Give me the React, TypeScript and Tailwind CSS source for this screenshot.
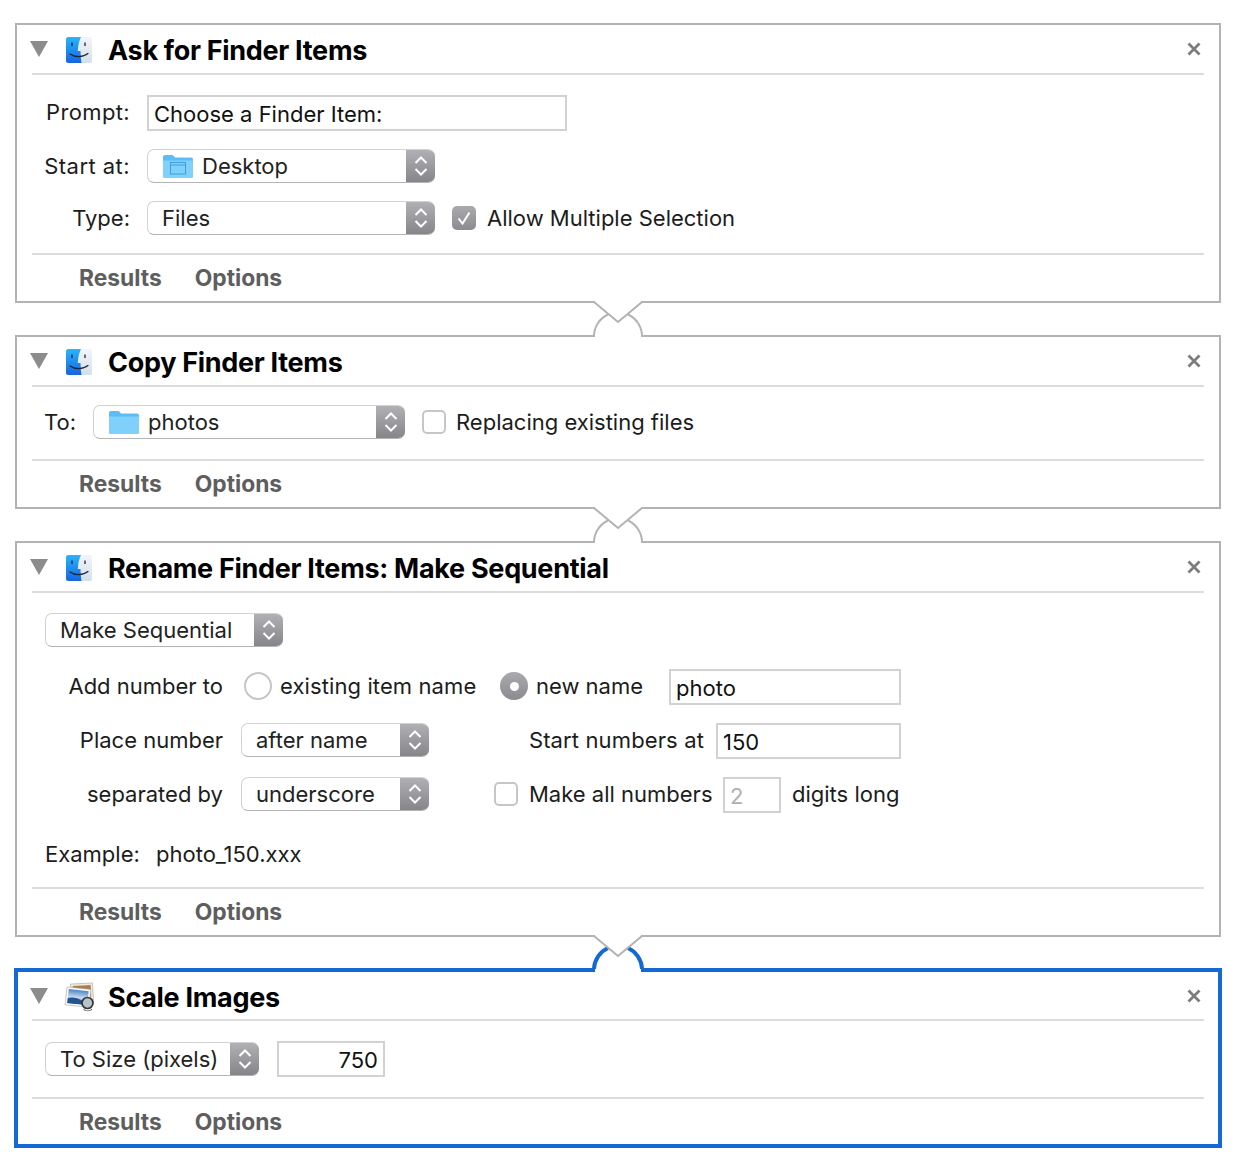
import type { ReactNode } from "react";
import clsx from "clsx";

const FinderIcon = () => (
  <svg width="30" height="30" viewBox="0 0 30 30" className="shrink-0">
    <defs>
      <linearGradient id="finderBlue" x1="0" y1="0" x2="0" y2="1">
        <stop offset="0" stopColor="#2ab4fa" />
        <stop offset="1" stopColor="#1665e0" />
      </linearGradient>
      <linearGradient id="finderPale" x1="0" y1="0" x2="0" y2="1">
        <stop offset="0" stopColor="#f3f5f8" />
        <stop offset="1" stopColor="#d5dfe9" />
      </linearGradient>
    </defs>
    <rect x="2" y="2" width="26" height="26" rx="2.5" fill="url(#finderPale)" />
    <path d="M4.500 2H17c-1.600 3.500-3 8-3.200 14H16.500c0 4 .3 8 1 12H4.500A2.500 2.500 0 0 1 2 25.500V4.500A2.500 2.500 0 0 1 4.500 2Z" fill="url(#finderBlue)" />
    <path d="M8 7.500v3.500M21 7.500v3.500" stroke="#16263f" strokeWidth="1.300" />
    <path d="M6 19c4.500 3.500 13 3.500 18 -.5" fill="none" stroke="#16263f" strokeWidth="1.200" strokeLinecap="round" />
  </svg>
);

const ScaleIcon = () => (
  <svg width="32" height="30" viewBox="0 0 32 30" className="shrink-0">
    <defs>
      <linearGradient id="photoSky" x1="0" y1="0" x2="0" y2="1">
        <stop offset="0" stopColor="#4d86c4" />
        <stop offset="0.55" stopColor="#c9dcee" />
        <stop offset="1" stopColor="#1e4f8c" />
      </linearGradient>
    </defs>
    <rect x="7" y="1.500" width="22" height="17" fill="#f1ece0" stroke="#a8a294" strokeWidth=".6" transform="rotate(-3 18 10)" />
    <rect x="9" y="3.500" width="18" height="12" fill="#a87f4a" transform="rotate(-3 18 10)" />
    <g transform="rotate(6 13 15)">
      <rect x="2" y="6" width="24" height="18" fill="#fafafa" stroke="#a9a9a9" strokeWidth=".6" />
      <rect x="4" y="8" width="20" height="14" fill="url(#photoSky)" />
      <path d="M4 17c5-2 10-1 14 1l6 1v3H4Z" fill="#24548f" />
    </g>
    <circle cx="23.500" cy="21" r="5.500" fill="#b9c2c8" stroke="#35363a" strokeWidth="1.700" />
    <path d="M19.500 26.500c2 2.500 6.500 2.500 8.500 0v1.500c-2 1.500-6.500 1.500-8.500 0Z" fill="#6e6a60" />
  </svg>
);

const FolderIcon = ({ desktop }: { desktop?: boolean }) => (
  <svg width="30" height="24" viewBox="0 0 30 24" className="shrink-0">
    <path d="M0 3a2 2 0 0 1 2-2h7a2 2 0 0 1 1.500.700L12 3.500h16a2 2 0 0 1 2 2V22a2 2 0 0 1-2 2H2a2 2 0 0 1-2-2Z" fill="#5cbdf5" />
    <path d="M0 6.500h30V22a2 2 0 0 1-2 2H2a2 2 0 0 1-2-2Z" fill="#7fd0fb" />
    {desktop && (
      <g fill="none" stroke="#3d9fdb" strokeWidth="1">
        <rect x="7.500" y="8.500" width="15" height="11.500" />
        <path d="M7.500 11h15" />
      </g>
    )}
  </svg>
);

const Select = ({ width, label, folder, desktop }: { width: string; label: string; folder?: boolean; desktop?: boolean }) => (
  <div className={clsx("flex h-[34px] shrink-0 items-stretch overflow-hidden rounded-[7px] border border-r-0 border-[#d2d2d2] border-b-[#b4b4b4] bg-white", width)}>
    <div className={clsx("flex min-w-0 flex-1 items-center text-[#222]", folder ? "gap-[9px] pl-[15px]" : "pl-[14px]")}>
      {folder && <FolderIcon desktop={desktop} />}
      <span className="whitespace-nowrap">{label}</span>
    </div>
    <div className="flex w-[29px] items-center justify-center bg-linear-to-b from-[#b0b0b5] to-[#85858a]">
      <svg width="16" height="24" viewBox="0 0 16 24" fill="none" stroke="#fff" strokeWidth="2">
        <path d="M2.500 9 8 3.500 13.500 9M2.500 15 8 20.500 13.500 15" />
      </svg>
    </div>
  </div>
);

const TextBox = ({ width, children, className }: { width: string; children?: ReactNode; className?: string }) => (
  <div className={clsx("flex h-[36px] shrink-0 items-center border-2 border-[#d2d2d2] bg-white px-[5px] pt-[2px] text-[#111]", width, className)}>
    {children}
  </div>
);

const Checkbox = ({ checked }: { checked?: boolean }) =>
  checked ? (
    <div className="flex size-[24px] shrink-0 items-center justify-center rounded-[5px] bg-linear-to-b from-[#a9a9ae] to-[#8b8b90]">
      <svg width="16" height="16" viewBox="0 0 16 16" fill="none" stroke="#fff" strokeWidth="2">
        <path d="M2.500 8.500 6.500 13.500 13.500 2.500" />
      </svg>
    </div>
  ) : (
    <div className="size-[24px] shrink-0 rounded-[5px] border-2 border-[#c6c6c6] bg-white" />
  );

const Radio = ({ selected }: { selected?: boolean }) =>
  selected ? (
    <div className="flex size-[28px] shrink-0 items-center justify-center rounded-full bg-linear-to-b from-[#a9a9ae] to-[#8b8b90]">
      <div className="size-[9px] rounded-full bg-white" />
    </div>
  ) : (
    <div className="size-[28px] shrink-0 rounded-full border-2 border-[#c6c6c6] bg-white" />
  );

const Card = ({ title, icon, active, children }: { title: string; icon: ReactNode; active?: boolean; children: ReactNode }) => (
  <section className={clsx("flex flex-col bg-white", active ? "mx-[14px] border-4 border-[#1469d4] px-[14px]" : "mx-[15px] border-2 border-[#b3b3b3] px-[15px]")}>
    <header className={clsx("flex items-center border-b-2 border-[#dcdcdc] pt-[4px]", active ? "h-[49px]" : "h-[50px]")}>
      <svg width="18" height="16" viewBox="0 0 18 16" className="-ml-[2px] mb-[4px] shrink-0">
        <path d="M0 0h18L9 16Z" fill="#8c8c8c" />
      </svg>
      <span className="mb-[2px] ml-[16px]">{icon}</span>
      <h2 className={clsx("flex-1 text-[27px] font-bold tracking-[-0.3px] text-black", active ? "ml-[12px]" : "ml-[14px]")}>{title}</h2>
      <svg width="14" height="14" viewBox="0 0 14 14" stroke="#7d7d7d" strokeWidth="2.800" className="mb-[4px] mr-[3px]">
        <path d="M1.500 1.500 12.500 12.500M12.500 1.500 1.500 12.500" />
      </svg>
    </header>
    {children}
    <footer className={clsx("flex items-center gap-[33px] border-t-2 border-[#dcdcdc] pl-[47px] text-[22.8px] font-bold text-[#5e5e5e]", active ? "h-[47px]" : "h-[48px]")}>
      <span>Results</span>
      <span>Options</span>
    </footer>
  </section>
);

// the puzzle-piece joint between two actions
const Connector = ({ active }: { active?: boolean }) => (
  <div className={clsx("relative", active ? "h-[31px]" : "h-[32px]")}>
    <svg width="56" height="40" viewBox="0 0 56 40" className="absolute -top-[2px] left-1/2 -translate-x-1/2" fill="none">
      <rect x="5" y="0" width="46" height="2" fill="#fff" />
      <rect x="5" y={active ? 32 : 33} width="46" height="6" fill="#fff" />
      <path
        d={active ? "M4 34v-.5A24 24 0 0 1 18 13M38 13A24 24 0 0 1 52 33.500V34" : "M4 35A24 24 0 0 1 18 13.500M38 13.500A24 24 0 0 1 52 35"}
        stroke={active ? "#1469d4" : "#b3b3b3"}
        strokeWidth={active ? 4 : 2}
      />
      <path d="M4 1 28 21 52 1" stroke="#b3b3b3" strokeWidth="2" />
    </svg>
  </div>
);

export default function App() {
  return (
    <div className="flex min-h-[1170px] w-[1236px] flex-col bg-white pt-[23px] text-[22px] leading-[30px] text-[#1c1c1c] [font-family:Inter,'Liberation_Sans',sans-serif]">
      <Card title="Ask for Finder Items" icon={<FinderIcon />}>
        <div className="flex h-[178px] flex-col pt-[20px]">
          <div className="flex items-center">
            <span className="-mt-[2px] w-[98px] shrink-0 text-right tracking-[0.35px]">Prompt:</span>
            <TextBox width="w-[420px]" className="ml-[17px]">Choose a Finder Item:</TextBox>
          </div>
          <div className="mt-[18px] flex items-center">
            <span className="w-[98px] shrink-0 text-right tracking-[0.45px]">Start at:</span>
            <div className="ml-[17px]"><Select width="w-[288px]" label="Desktop" folder desktop /></div>
          </div>
          <div className="mt-[18px] flex items-center">
            <span className="w-[98px] shrink-0 text-right">Type:</span>
            <div className="ml-[17px]"><Select width="w-[288px]" label="Files" /></div>
            <div className="ml-[17px]"><Checkbox checked /></div>
            <span className="ml-[11px]">Allow Multiple Selection</span>
          </div>
        </div>
      </Card>
      <Connector />
      <Card title="Copy Finder Items" icon={<FinderIcon />}>
        <div className="flex h-[72px] items-center pb-[2px]">
          <span className="ml-[12px] w-[32px] shrink-0">To:</span>
          <div className="ml-[17px]"><Select width="w-[312px]" label="photos" folder /></div>
          <div className="ml-[17px]"><Checkbox /></div>
          <span className="ml-[10px]">Replacing existing files</span>
        </div>
      </Card>
      <Connector />
      <Card title="Rename Finder Items: Make Sequential" icon={<FinderIcon />}>
        <div className="flex h-[294px] flex-col pt-[20px]">
          <div className="ml-[13px]"><Select width="w-[238px]" label="Make Sequential" /></div>
          <div className="mt-[22px] flex h-[36px] items-center whitespace-nowrap pb-[2px]">
            <span className="w-[191px] shrink-0 text-right">Add number to</span>
            <div className="ml-[21px]"><Radio /></div>
            <span className="ml-[8px] w-[196px] shrink-0 tracking-[0.1px]">existing item name</span>
            <div className="ml-[24px]"><Radio selected /></div>
            <span className="ml-[8px] w-[106px] shrink-0">new name</span>
            <TextBox width="w-[232px]" className="ml-[27px] self-start">photo</TextBox>
          </div>
          <div className="mt-[18px] flex h-[36px] items-center whitespace-nowrap pb-[2px]">
            <span className="w-[191px] shrink-0 text-right">Place number</span>
            <div className="ml-[18px]"><Select width="w-[188px]" label="after name" /></div>
            <span className="w-[275px] shrink-0 text-right tracking-[0.13px]">Start numbers at</span>
            <TextBox width="w-[185px]" className="ml-[12px] self-start">150</TextBox>
          </div>
          <div className="mt-[18px] flex h-[36px] items-center whitespace-nowrap pb-[2px]">
            <span className="w-[191px] shrink-0 text-right">separated by</span>
            <div className="ml-[18px]"><Select width="w-[188px]" label="underscore" /></div>
            <div className="ml-[65px]"><Checkbox /></div>
            <span className="ml-[11px] w-[182px] shrink-0">Make all numbers</span>
            <TextBox width="w-[58px]" className="ml-[12px] self-start text-[#b0b0b0]">2</TextBox>
            <span className="ml-[11px]">digits long</span>
          </div>
          <div className="ml-[13px] mt-[26px] flex whitespace-nowrap">
            <span className="w-[111px] shrink-0">Example:</span>
            <span>photo_150.xxx</span>
          </div>
        </div>
      </Card>
      <Connector active />
      <Card title="Scale Images" icon={<ScaleIcon />} active>
        <div className="flex h-[76px] items-center pl-[13px]">
          <Select width="w-[214px]" label="To Size (pixels)" />
          <TextBox width="w-[108px]" className="ml-[18px] justify-end">750</TextBox>
        </div>
      </Card>
    </div>
  );
}
